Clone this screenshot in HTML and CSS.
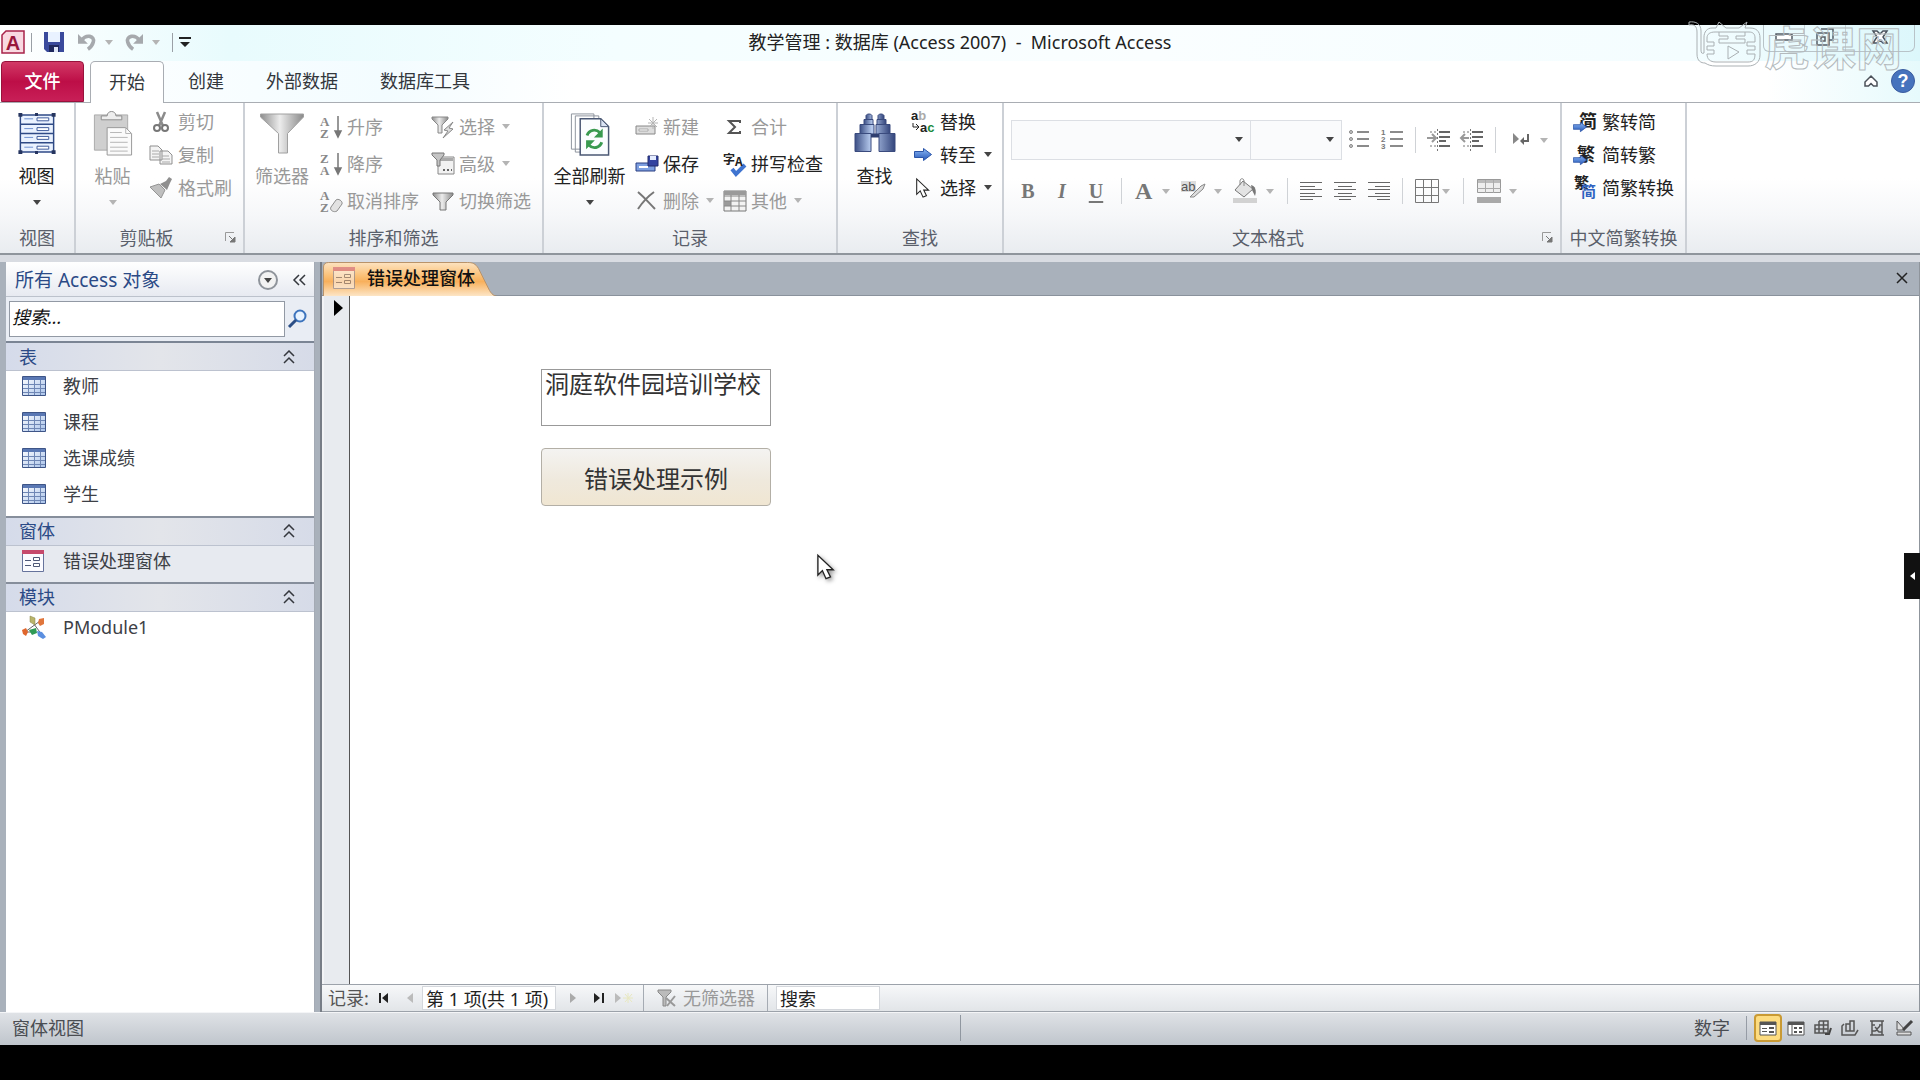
FILE: index.html
```html
<!DOCTYPE html>
<html lang="zh-CN">
<head>
<meta charset="utf-8">
<title>教学管理 : 数据库 (Access 2007) - Microsoft Access</title>
<link rel="stylesheet" href="styles.css">
</head>
<body>
<svg class="defs" aria-hidden="true">
  <defs>
    <linearGradient id="gMetal" x1="0" x2="1"><stop offset="0" stop-color="#8d8d8d"/><stop offset=".45" stop-color="#ececec"/><stop offset="1" stop-color="#8a8a8a"/></linearGradient>
    <linearGradient id="gBlue" x1="0" x2="1"><stop offset="0" stop-color="#3c4f85"/><stop offset=".4" stop-color="#b9cdf0"/><stop offset="1" stop-color="#33457c"/></linearGradient>
    <linearGradient id="gArrow" x1="0" x2="0" y1="0" y2="1"><stop offset="0" stop-color="#8db9f5"/><stop offset="1" stop-color="#2456b8"/></linearGradient>
    <linearGradient id="gCell" x1="0" x2="1" y1="0" y2="1"><stop offset="0" stop-color="#fff"/><stop offset="1" stop-color="#a9c3ea"/></linearGradient>
  </defs>
  <symbol id="table" viewBox="0 0 24 20"><path d="M.5.500h23v19H.5z" fill="url(#gCell)" stroke="#3e5587"/><path d="M1 1h22v3H1z" fill="#5a78b4"/><path d="M1 8.500h22M1 12.500h22M1 16.500h22M6.500 4v15M12.500 4v15M18.500 4v15" stroke="#6f87b5"/></symbol>
  <symbol id="form" viewBox="0 0 22 22"><path d="M.5 1.500h21v20H.5z" fill="#fbfbff" stroke="#66739c"/><path d="M0 0h22v4H0z" fill="#c64a6c"/><path d="M3 10.500h6M3 15.500h6" stroke="#4e5878"/><path d="M11.500 7.500h6v3h-6zM11.500 13.500h6v3h-6z" fill="#fff" stroke="#4e5878"/></symbol>
  <symbol id="funnel" viewBox="0 0 44 40"><path d="M.5.500h43v3L27.500 20v19.500h-9V20L.5 3.500z" fill="url(#gMetal)" stroke="#a0a0a0"/></symbol>
  <symbol id="cursor" viewBox="0 0 20 28"><path d="M1 1v22l5-5 4 9 5-2-4-8h7z" fill="#fff" stroke="#222" stroke-width="1.500"/></symbol>
  <symbol id="bluearrow" viewBox="0 0 18 13"><path d="M.5 3.500h9v-3l8 6-8 6v-3h-9z" fill="url(#gArrow)" stroke="#2a54a8"/></symbol>
  <symbol id="undo" viewBox="0 0 20 20"><path d="M4 8c5-7 15-5 13 2-1 4-3 6-6 8" fill="none" stroke="#a6a9ad" stroke-width="4"/><path d="M0 1v11h11z" fill="#a6a9ad"/></symbol>
  <symbol id="chev" viewBox="0 0 12 14"><path d="M1 6l5-5 5 5M1 13l5-5 5 5" fill="none" stroke="#34373d" stroke-width="1.500"/></symbol>
  <symbol id="launch" viewBox="0 0 11 11"><path d="M.5 9V.500H9" fill="none" stroke="#999"/><path d="M4 4l5 5M10 5v5H5z" fill="#777" stroke="#777"/></symbol>
</svg>

<div class="window">
  <header class="titlebar">
    <div class="quick">
      <svg class="applogo" viewBox="0 0 24 24"><path d="M5 1h18v22H1V5z" fill="#f9d9e1" stroke="#a8234a" stroke-width="1.500"/><text x="12" y="20" text-anchor="middle" class="logo-a">A</text></svg>
      <span class="vbar"></span>
      <button class="qbtn save" aria-label="保存"><svg width="20" height="20" viewBox="0 0 20 20"><path d="M0 0h20v20H3l-3-3z" fill="#3a4a9c"/><path d="M4 0h12v10H4z" fill="#e9f2ff"/><path d="M5 13h10v7H5z" fill="#20295e"/><path d="M10 15h4v5h-4z" fill="#dfe6f7"/></svg></button>
      <button class="qbtn undo" aria-label="撤消"><svg width="18" height="18"><use href="#undo"/></svg><i class="arrow dim"></i></button>
      <button class="qbtn undo" aria-label="恢复"><svg class="flip" width="18" height="18"><use href="#undo"/></svg><i class="arrow dim"></i></button>
      <span class="vbar"></span>
      <button class="qbtn" aria-label="自定义快速访问工具栏"><svg width="12" height="12" viewBox="0 0 12 12"><path d="M0 1h12v2H0zM1 6h10l-5 5z" fill="#222"/></svg></button>
    </div>
    <h1 class="title">教学管理 : 数据库 (Access 2007)&nbsp; -&nbsp; Microsoft Access</h1>
    <div class="winctl">
      <button aria-label="最小化"><svg width="18" height="8" viewBox="0 0 18 8"><path d="M1 1h16v6H1z" fill="#fff" stroke="#555d66" stroke-width="1.500"/></svg></button>
      <button aria-label="还原"><svg width="18" height="18" viewBox="0 0 18 18"><path d="M5 1h12v11h-4M1 5h12v12H1zM5 9h4v4H5z" fill="none" stroke="#555d66" stroke-width="1.500"/></svg></button>
      <button class="wide" aria-label="关闭"><svg width="16" height="14" viewBox="0 0 16 14"><path d="M1 1h4l3 3 3-3h4l-4 6 4 6h-4l-3-3-3 3H1l4-6z" fill="#fff" stroke="#4a525c" stroke-width="1.500"/></svg></button>
    </div>
    <div class="watermark" aria-hidden="true">
      <svg width="72" height="48" viewBox="0 0 72 48"><g fill="none" stroke="#aab0b3"><path d="M1 4c5-1 8 1 8 7v22c0 7 4 9 8 9 3 2 6 3 11 3h32c7 0 12-4 12-11V17c0-7-4-10-10-10h-5l2-6-8 6H38l-7-6-3 6h-4c-5 0-8 4-8 9v16c-2 1-3 0-3-3V10c0-7-5-10-12-9z"/><path d="M27 11h34c4 0 6 2 6 6v4h-8v4h8v4h-8v4h8c0 6-2 8-7 8H28c-6 0-9-3-9-8h7v-4h-7v-4h7v-4h-7v-4c0-4 3-6 8-6zM31 11v4h9v3h-9v4h26v-4h-9v-3h9v-4M40 25l11 6-11 7z"/></g></svg><span>虎课网</span>
    </div>
  </header>

  <nav class="tabs">
    <button class="tab file">文件</button>
    <button class="tab active">开始</button>
    <button class="tab">创建</button>
    <button class="tab">外部数据</button>
    <button class="tab">数据库工具</button>
    <div class="tabs-end">
      <button aria-label="功能区最小化"><svg width="14" height="12" viewBox="0 0 14 12"><path d="M7 1l6 6v4H9.500L7 8.500 4.500 11H1V7z" fill="#fff" stroke="#4c525a" stroke-width="1.500"/></svg></button>
      <button class="help" aria-label="帮助">?</button>
    </div>
  </nav>

  <section class="ribbon">
    <div class="group g-view">
      <div class="body">
        <button class="big"><svg class="ico" width="38" height="46" viewBox="0 0 38 46"><path d="M2 4h34v38H2z" fill="#eaf2ff" stroke="#2f4a86" stroke-width="1.500"/><path d="M2 13.500h34M2 23h34M2 32.500h34" stroke="#2f4a86" stroke-width="1.500"/><path d="M6 8h9M6 18h9M6 27h9M6 37h9" stroke="#6e8fd0"/><path d="M19 7h12v3H19zM19 17h12v3H19zM19 26h12v3H19zM19 36h12v3H19z" fill="#fff" stroke="#3d5a9b"/><path d="M0 2h4v4H0zM34 2h4v4h-4zM0 40h4v4H0zM34 40h4v4h-4zM17 2h3v3h-3zM17 41h3v3h-3z" fill="#26355f"/></svg><span>视图</span><i class="arrow"></i></button>
      </div>
      <div class="foot"><span>视图</span></div>
    </div>

    <div class="group g-clip">
      <div class="body">
        <button class="big off"><svg class="ico" width="40" height="46" viewBox="0 0 40 46"><path d="M1 4h34v36H1z" fill="#cfcfcf" stroke="#ababab"/><path d="M8 9V5h6c0-6 9-6 9 0h6v4z" fill="#eee" stroke="#8d8d8d"/><path d="M14 17h19l6 6v22H14z" fill="#fafafa" stroke="#999"/><path d="M33 17v6h6M17 22h12M17 27h18M17 32h18M17 37h18M17 41h18" fill="none" stroke="#b5b5b5"/></svg><span>粘贴</span><i class="arrow dim"></i></button>
        <div class="col tight">
          <button class="small off"><svg width="24" height="24" viewBox="0 0 24 24"><path d="M8 2l6 14M16 2l-6 14" stroke="#8b8b8b" stroke-width="2.500"/><circle cx="8" cy="18" r="3" fill="#fff" stroke="#777" stroke-width="2"/><circle cx="16" cy="18" r="3" fill="#fff" stroke="#777" stroke-width="2"/></svg>剪切</button>
          <button class="small off"><svg width="24" height="24" viewBox="0 0 24 24"><path d="M1 3h8l4 4v10H1zM11 8h8l4 4v9H11z" fill="#f4f4f4" stroke="#8f8f8f"/><path d="M3 8h7M3 11h7M3 14h7M13 13h7M13 16h8M13 19h8" stroke="#aaa"/></svg>复制</button>
          <button class="small off"><svg width="24" height="24" viewBox="0 0 24 24"><path d="M1 11l9-3 6 6-4 8z" fill="#bfbfbf" stroke="#949494"/><path d="M11 8l6-3 3-4 3 2-2 4-3 7z" fill="#8f8f8f"/></svg>格式刷</button>
        </div>
      </div>
      <div class="foot"><span>剪贴板</span><svg class="launch" width="11" height="11"><use href="#launch"/></svg></div>
    </div>

    <div class="group g-sort">
      <div class="body">
        <button class="big off"><svg class="ico" width="44" height="40"><use href="#funnel"/></svg><span>筛选器</span></button>
        <div class="col loose">
          <button class="small off"><svg width="24" height="24" viewBox="0 0 24 24"><text x="1" y="11" class="az">A</text><text x="1" y="23" class="az">Z</text><path d="M19 1v18M16 16l3 6 3-6z" stroke="#777" stroke-width="1.500" fill="#777"/></svg>升序</button>
          <button class="small off"><svg width="24" height="24" viewBox="0 0 24 24"><text x="1" y="11" class="az">Z</text><text x="1" y="23" class="az">A</text><path d="M19 1v18M16 16l3 6 3-6z" stroke="#777" stroke-width="1.500" fill="#777"/></svg>降序</button>
          <button class="small off"><svg width="24" height="24" viewBox="0 0 24 24"><text x="1" y="11" class="az">A</text><text x="1" y="23" class="az">Z</text><path d="M12 18l5-7c2-2 7 1 6 4l-5 7c-3 2-8-1-6-4z" fill="#e2e2e2" stroke="#8f8f8f"/></svg>取消排序</button>
        </div>
        <div class="col loose">
          <button class="small off"><svg width="24" height="24" viewBox="0 0 24 24"><path d="M1 2h16v2l-6 6v8H7v-8L1 4z" fill="url(#gMetal)" stroke="#888"/><path d="M22 7l-9 8 4 1-5 7 10-9-4-1z" fill="#ddd" stroke="#888"/></svg>选择<i class="arrow dim"></i></button>
          <button class="small off"><svg width="24" height="24" viewBox="0 0 24 24"><path d="M7 5h16v17H7z" fill="#f2f2f2" stroke="#888"/><path d="M9 6h13v3H9z" fill="#aaa"/><path d="M1 1h12v2L9 8v6H6V8L1 3z" fill="#c4c4c4" stroke="#777"/><path d="M12 18h2M16 18h2M20 18h1" stroke="#666" stroke-width="2"/></svg>高级<i class="arrow dim"></i></button>
          <button class="small off"><svg width="24" height="24" viewBox="0 0 24 24"><path d="M2 4h20v2l-7 7v8H9v-8L2 6z" fill="url(#gMetal)" stroke="#777"/></svg>切换筛选</button>
        </div>
      </div>
      <div class="foot"><span>排序和筛选</span></div>
    </div>

    <div class="group g-rec">
      <div class="body">
        <button class="big"><svg class="ico" width="40" height="46" viewBox="0 0 40 46"><path d="M1 3h23v36H1zM5 5h24v37H5z" fill="#fff" stroke="#8d939d"/><path d="M10 8h21l8 8v29H10z" fill="#fbfdff" stroke="#4b5874" stroke-width="1.500"/><path d="M31 8v8h8z" fill="#dbe4f4" stroke="#4b5874"/><path d="M17 25c2-6 9-7 13-3M32 32c-2 6-9 7-13 3" fill="none" stroke="#3a9a50" stroke-width="3"/><path d="M33 18v9h-9zM16 39v-9h9z" fill="#3a9a50"/></svg><span>全部刷新</span><i class="arrow"></i></button>
        <div class="col loose">
          <button class="small off"><svg width="24" height="24" viewBox="0 0 24 24"><path d="M1 11h19v8H1z" fill="#ddd" stroke="#888"/><path d="M4 14h9v2H4z" fill="#fff" stroke="#aaa"/><path d="M18 2v12M13 8h10M14 4l8 8M22 4l-8 8" stroke="#b5b5b5"/></svg>新建</button>
          <button class="small"><svg width="24" height="24" viewBox="0 0 24 24"><path d="M1 11h19v8H1z" fill="#7d9fe0" stroke="#2b3f82"/><path d="M4 14h9v2H4z" fill="#fff"/><path d="M13 4h10v10H13z" fill="#3343a0" stroke="#222c6c"/><path d="M15 4h6v4h-6z" fill="#e4ecff"/></svg>保存</button>
          <button class="small off"><svg width="24" height="24" viewBox="0 0 24 24"><path d="M3 3c6 5 11 11 17 17M19 3C12 8 7 14 3 20" fill="none" stroke="#777" stroke-width="2"/></svg>删除<i class="arrow dim"></i></button>
        </div>
        <div class="col loose">
          <button class="small off"><svg width="24" height="24" viewBox="0 0 24 24"><path d="M17 8V6H6l6 6-6 6h11v-2" fill="none" stroke="#555" stroke-width="2"/></svg>合计</button>
          <button class="small"><svg width="24" height="24" viewBox="0 0 24 24"><path d="M9 17l4 5 9-9" fill="none" stroke="#3f74d0" stroke-width="4"/><text x="0" y="12" class="tiny">字</text><text x="12" y="14" class="tiny">A</text></svg>拼写检查</button>
          <button class="small off"><svg width="24" height="24" viewBox="0 0 24 24"><path d="M1 2h22v20H1z" fill="#f3f3f3" stroke="#777"/><path d="M1 2h22v4H1zM1 12h7v5H1z" fill="#9a9a9a"/><path d="M1 7h22M1 12h22M1 17h22M8 6v16M16 6v16" stroke="#888"/></svg>其他<i class="arrow dim"></i></button>
        </div>
      </div>
      <div class="foot"><span>记录</span></div>
    </div>

    <div class="group g-find">
      <div class="body">
        <button class="big"><svg class="ico" width="42" height="40" viewBox="0 0 42 40"><g fill="url(#gBlue)" stroke="#3a4b7e"><path d="M12 2c1-2 5-2 6 0v4h-6zM24 2c1-2 5-2 6 0v4h-6z"/><path d="M10 6h9v6h-9zM23 6h9v6h-9z"/><path d="M6 11h14v11H6zM22 11h14v11H22z"/><path d="M1 20h16v18H1zM25 20h16v18H25z"/></g><path d="M17 20h8v4h-8z" fill="#2f3f70"/></svg><span>查找</span></button>
        <div class="col tight">
          <button class="small"><svg width="24" height="24" viewBox="0 0 24 24"><text x="0" y="10" class="ab">a<tspan fill="#aaa">b</tspan></text><text x="9" y="22" class="ab">a<tspan fill="#178a3c">c</tspan></text><path d="M2 13v4h5M5 14l3 3-3 3" fill="none" stroke="#222"/></svg>替换</button>
          <button class="small"><svg width="24" height="24" viewBox="-3 -5 24 24"><use href="#bluearrow" width="18" height="13"/></svg>转至<i class="arrow"></i></button>
          <button class="small"><svg width="24" height="24" viewBox="-5 -1 24 24"><use href="#cursor" width="14" height="22"/></svg>选择<i class="arrow"></i></button>
        </div>
      </div>
      <div class="foot"><span>查找</span></div>
    </div>

    <div class="group g-text">
      <div class="body fmt">
        <div class="fmtrow">
          <span class="combo font"><select aria-label="字体" disabled><option></option></select><i class="arrow"></i></span>
          <span class="combo size"><select aria-label="字号" disabled><option></option></select><i class="arrow"></i></span>
          <button class="tool" aria-label="项目符号"><svg width="24" height="24" viewBox="0 0 24 24"><path d="M10 4h12M10 11h12M10 18h12" stroke="#666" stroke-width="1.500"/><g fill="#ccc" stroke="#888"><circle cx="4" cy="4" r="1.500"/><circle cx="4" cy="11" r="1.500"/><circle cx="4" cy="18" r="1.500"/></g></svg></button>
          <button class="tool num" aria-label="编号"><svg width="24" height="24" viewBox="0 0 24 24"><path d="M10 4h13M10 11h13M10 18h13" stroke="#666" stroke-width="1.500"/><text x="1" y="7" class="nums">1</text><text x="1" y="14" class="nums">2</text><text x="1" y="21" class="nums">3</text></svg></button>
          <span class="sep"></span>
          <button class="tool ind" aria-label="增加缩进量"><svg width="24" height="24" viewBox="0 0 24 24"><path d="M12 4h11M12 9h11M12 13h7M12 18h11" stroke="#666" stroke-width="2"/><path d="M0 10h8M5 6l4 4-4 4" fill="none" stroke="#999" stroke-width="2"/><path d="M3 4h6M3 18h6M10.500 1v22" stroke="#777" stroke-dasharray="2 2"/></svg></button>
          <button class="tool ind" aria-label="减少缩进量"><svg width="24" height="24" viewBox="0 0 24 24"><path d="M12 4h11M12 9h11M12 13h7M12 18h11" stroke="#666" stroke-width="2"/><path d="M9 10H1M5 6l-4 4 4 4" fill="none" stroke="#999" stroke-width="2"/><path d="M3 4h6M3 18h6M10.500 1v22" stroke="#777" stroke-dasharray="2 2"/></svg></button>
          <span class="sep near"></span>
          <button class="tool par" aria-label="文字方向"><svg width="18" height="14" viewBox="0 0 18 14"><path d="M1 0v11l6-5z" fill="#888"/><path d="M16 1v7h-6" fill="none" stroke="#666" stroke-width="2"/><path d="M12 4v8L8 8z" fill="#666"/></svg><i class="arrow dim"></i></button>
        </div>
        <div class="fmtrow two">
          <button class="tool biu"><b>B</b></button>
          <button class="tool biu"><b class="it">I</b></button>
          <button class="tool biu"><b class="un">U</b></button>
          <span class="sep"></span>
          <button class="tool drop fc"><b>A</b><i class="arrow dim"></i></button>
          <button class="tool drop" aria-label="突出显示"><svg width="26" height="24" viewBox="0 0 26 24"><path d="M1 2h15v11H1z" fill="#ddd"/><text x="1" y="12" class="abh">ab</text><path d="M10 18l11-11 4-2-2 5-9 8z" fill="#ddd" stroke="#888"/></svg><i class="arrow dim"></i></button>
          <button class="tool drop" aria-label="填充颜色"><svg width="26" height="26" viewBox="0 0 26 26"><path d="M11 3l10 8-9 8-9-7z" fill="#e3e3e3" stroke="#777"/><path d="M8 7V3c0-3 4-3 4 0v5" fill="none" stroke="#888"/><path d="M19 7c4 1 6 5 4 11l-3-6z" fill="#777"/><path d="M1 20h24v5H1z" fill="#d2d2d2"/></svg><i class="arrow dim"></i></button>
          <span class="sep"></span>
          <button class="tool al" aria-label="左对齐"><svg width="22" height="20" viewBox="0 0 22 20"><path d="M0 1.500h22M0 5.500h15M0 8.500h22M0 12.500h15M0 15.500h22M0 18.500h13" stroke="#666"/></svg></button>
          <button class="tool al" aria-label="居中"><svg width="22" height="20" viewBox="0 0 22 20"><path d="M0 1.500h22M4 5.500h14M0 8.500h22M4 12.500h14M0 15.500h22M5 18.500h12" stroke="#666"/></svg></button>
          <button class="tool al" aria-label="右对齐"><svg width="22" height="20" viewBox="0 0 22 20"><path d="M0 1.500h22M7 5.500h15M0 8.500h22M7 12.500h15M0 15.500h22M9 18.500h13" stroke="#666"/></svg></button>
          <span class="sep"></span>
          <button class="tool grid" aria-label="网格线"><svg width="24" height="24" viewBox="0 0 24 24"><path d="M.5.500h23v23H.5zM8.500 0v24M16.500 0v24M0 8.500h24M0 16.500h24" fill="none" stroke="#777"/></svg><i class="arrow dim"></i></button>
          <span class="sep"></span>
          <button class="tool drop alt" aria-label="可选行颜色"><svg width="24" height="24" viewBox="0 0 24 24"><path d="M.5.500h23v13H.5z" fill="#eee" stroke="#999"/><path d="M1 1h22v3H1z" fill="#bbb"/><path d="M8.500 1v13M16.500 1v13M0 9.500h24" stroke="#aaa"/><path d="M0 18h24v6H0z" fill="#a9a9a9"/></svg><i class="arrow dim"></i></button>
        </div>
      </div>
      <div class="foot"><span>文本格式</span><svg class="launch" width="11" height="11"><use href="#launch"/></svg></div>
    </div>

    <div class="group g-cn">
      <div class="body">
        <div class="col tight">
          <button class="small"><svg width="26" height="24" viewBox="0 0 26 24"><text x="6" y="18" class="cn">简</text><use href="#bluearrow" y="11" width="14" height="12"/></svg>繁转简</button>
          <button class="small"><svg width="26" height="24" viewBox="0 0 26 24"><text x="4" y="18" class="cn">繁</text><use href="#bluearrow" y="11" width="14" height="12"/></svg>简转繁</button>
          <button class="small"><svg width="26" height="24" viewBox="0 0 26 24"><text x="1" y="12" class="cn sm">繁</text><text x="8" y="21" class="cn sm blue">简</text></svg>简繁转换</button>
        </div>
      </div>
      <div class="foot"><span>中文简繁转换</span></div>
    </div>
  </section>

  <main class="work">
    <aside class="pane">
      <div class="pane-head"><h2>所有 Access 对象</h2>
        <button class="round" aria-label="选择类别"><i class="arrow"></i></button>
        <button class="fold" aria-label="折叠"><svg width="14" height="12" viewBox="0 0 14 12"><path d="M6 1L1 6l5 5M12 1L7 6l5 5" fill="none" stroke="#34373d" stroke-width="1.500"/></svg></button></div>
      <div class="pane-search"><input type="text" aria-label="搜索对象" placeholder="搜索..."><button aria-label="搜索"><svg width="20" height="20" viewBox="0 0 20 20"><circle cx="12" cy="7" r="5.500" fill="#e8f3ff" stroke="#3d74bd" stroke-width="2"/><path d="M8 11l-7 7" stroke="#2b4e86" stroke-width="3"/></svg></button></div>
      <button class="cat"><span>表</span><svg width="12" height="14"><use href="#chev"/></svg></button>
      <ul class="items">
        <li><a href="#"><svg width="24" height="20"><use href="#table"/></svg>教师</a></li>
        <li><a href="#"><svg width="24" height="20"><use href="#table"/></svg>课程</a></li>
        <li><a href="#"><svg width="24" height="20"><use href="#table"/></svg>选课成绩</a></li>
        <li><a href="#"><svg width="24" height="20"><use href="#table"/></svg>学生</a></li>
      </ul>
      <button class="cat"><span>窗体</span><svg width="12" height="14"><use href="#chev"/></svg></button>
      <ul class="items sel">
        <li><a href="#"><svg width="24" height="22"><use href="#form" width="22"/></svg>错误处理窗体</a></li>
      </ul>
      <button class="cat"><span>模块</span><svg width="12" height="14"><use href="#chev"/></svg></button>
      <ul class="items">
        <li><a href="#"><svg class="mod" width="24" height="24" viewBox="0 0 24 24"><path d="M3 17L18 6M9 5l11 15M3 17h9" stroke="#666" fill="none"/><path d="M8 1l5 2v7l-5-3z" fill="#b9b46a" stroke="#8a8748" stroke-width=".5"/><path d="M17 4l5-1v6l-4 2-2-3z" fill="#e0763c"/><path d="M0 15l4-2 2 4-2 4-3-2z" fill="#e0662c"/><path d="M7 15l7-2 1 5-5 2z" fill="#2f9a55"/><path d="M15 16l5 1 4 5-3 2-5-3z" fill="#5b8fe0"/></svg>PModule1</a></li>
      </ul>
    </aside>

    <section class="doc">
      <div class="doc-tabs">
        <button class="doc-tab"><svg class="shape" width="180" height="35" viewBox="0 0 180 35" aria-hidden="true"><defs><linearGradient id="gTab" x1="0" x2="0" y1="0" y2="1"><stop offset="0" stop-color="#fde3c0"/><stop offset=".4" stop-color="#fbbf74"/><stop offset=".55" stop-color="#f8b05c"/><stop offset="1" stop-color="#fde9cd"/></linearGradient></defs><path d="M.5 35V5c0-3 2-4.500 5-4.500h139c5 0 8 1 11 6l11 22c3 5 6 6.500 13 6.500z" fill="url(#gTab)" stroke="#b9936a"/></svg><svg class="ficon" width="22" height="22"><use href="#form"/></svg><span>错误处理窗体</span></button>
        <button class="doc-close" aria-label="关闭"><svg width="12" height="12" viewBox="0 0 12 12"><path d="M1 1l10 10M11 1L1 11" stroke="#222" stroke-width="1.500"/></svg></button>
      </div>
      <div class="canvas">
        <div class="selector"><svg width="9" height="16" viewBox="0 0 9 16"><path d="M0 0l9 8-9 8z"/></svg></div>
        <form class="form">
          <input class="field" type="text" aria-label="名称" value="洞庭软件园培训学校">
          <button class="cmd" type="button">错误处理示例</button>
          <svg class="mouse" width="18" height="28"><use href="#cursor"/></svg>
        </form>
        <button class="drawer" aria-label="展开"><svg width="5" height="8" viewBox="0 0 5 8"><path d="M5 0v8L0 4z" fill="#fff"/></svg></button>
      </div>
      <div class="recbar">
        <label for="rec">记录:</label>
        <button aria-label="第一条"><svg width="10" height="12" viewBox="0 0 10 12"><path d="M0 1h2v10H0zM9 1v10L3 6z" fill="#222"/></svg></button>
        <button aria-label="上一条"><svg width="6" height="12" viewBox="0 0 6 12"><path d="M6 1v10L0 6z" fill="#bbb"/></svg></button>
        <input id="rec" type="text" value="第 1 项(共 1 项)">
        <button aria-label="下一条"><svg width="6" height="12" viewBox="0 0 6 12"><path d="M0 1v10l6-5z" fill="#aaa"/></svg></button>
        <button class="last" aria-label="最后一条"><svg width="10" height="12" viewBox="0 0 10 12"><path d="M8 1h2v10H8zM0 1v10l6-5z" fill="#222"/></svg></button>
        <button class="newrec" aria-label="新记录"><svg width="18" height="12" viewBox="0 0 18 12"><path d="M0 1v10l6-5z" fill="#bbb"/><path d="M13 1v10M8 6h10M10 2l7 8M17 2l-7 8" stroke="#e8e8c0"/></svg></button>
        <button class="nofilter"><svg width="20" height="18" viewBox="0 0 20 18"><path d="M1 1h13v2L9 8v9H6V8L1 3z" fill="#bbb" stroke="#888"/><path d="M9 9l9 8M18 7l-8 10" stroke="#999" stroke-width="2"/></svg>无筛选器</button>
        <input class="recsearch" type="text" aria-label="搜索" value="搜索">
      </div>
    </section>
  </main>

  <footer class="status">
    <span class="mode">窗体视图</span>
    <span class="numlock">数字</span>
    <div class="views">
      <button class="on" aria-label="窗体视图"><svg width="18" height="15" viewBox="0 0 18 15"><path d="M1 1h16v13H1z" fill="#fff" stroke="#555"/><path d="M1 1h16v3H1zM3 7h5v1H3zM3 10h5v1H3zM10 6h5v2h-5zM10 10h5v2h-5z" fill="#555"/></svg></button>
      <button aria-label="数据表视图"><svg width="18" height="15" viewBox="0 0 18 15"><path d="M1 1h16v13H1zM5 4v10" fill="#fff" stroke="#555"/><path d="M1 1h16v3H1zM7 6h3v2H7zM12 6h3v2h-3zM7 10h3v2H7zM12 10h3v2h-3z" fill="#555"/></svg></button>
      <button aria-label="数据透视表视图"><svg width="18" height="16" viewBox="0 0 18 16"><path d="M5 1h9v12H1V5h13M5 1v12M9.500 1v12M1 9h13" fill="none" stroke="#555" stroke-width="1.500"/><path d="M11 14h4l2-6" fill="none" stroke="#444" stroke-width="2"/></svg></button>
      <button aria-label="数据透视图视图"><svg width="18" height="16" viewBox="0 0 18 16"><path d="M5 11V4h4V1h4v10zM9 4v7M3 4L1 6v9h13l3-5" fill="none" stroke="#555" stroke-width="1.500"/></svg></button>
      <button aria-label="布局视图"><svg width="18" height="16" viewBox="0 0 18 16"><path d="M2 1h14M2 15h14M4 1v14M14 1v14M4 5h3M11 5h3M7 7l2 2 3-3M4 11h3l2-1 2 2h3" fill="none" stroke="#555" stroke-width="1.500"/></svg></button>
      <button aria-label="设计视图"><svg width="18" height="16" viewBox="0 0 18 16"><path d="M2 1v9h8zM2 12h14v3H2z" fill="#ddd" stroke="#555"/><path d="M17 1l-9 9" stroke="#444" stroke-width="3"/></svg></button>
    </div>
  </footer>
</div>
</body>
</html>
```
FILE: styles.css
```css
* { box-sizing: border-box; }
body {
  margin: 0;
  min-height: 100vh;
  padding: 25px 0 35px;
  display: flex;
  flex-direction: column;
  background: #000;
  color: #222;
  font: 18px/26px "Noto Sans", "Noto Sans CJK SC", sans-serif;
}
button, input, select { font: inherit; color: inherit; margin: 0; padding: 0; border: 0; background: none; border-radius: 0; }
h1, h2, ul { margin: 0; padding: 0; font: inherit; list-style: none; }
a { color: inherit; text-decoration: none; }
svg { display: block; flex: none; overflow: visible; }
.defs { position: absolute; width: 0; height: 0; overflow: hidden; }
.window { flex: 1; display: flex; flex-direction: column; background: #fff; min-width: 0; }

.arrow { display: inline-block; flex: none; width: 0; height: 0; border: 4px solid transparent; border-top: 5px solid #444; border-bottom: 0; }
.arrow.dim { border-top-color: #b4b4b4; }

/* title bar */
.titlebar {
  position: relative;
  display: grid;
  grid-template-columns: 1fr auto 1fr;
  height: 36px;
  background: linear-gradient(90deg, #fff, #e8fbfd 12%, #f4feff 32%, #fafeff 60%, #f4fdff 88%, #dcf7fb);
}
.quick { display: flex; align-items: center; padding: 0 0 2px 1px; }
.applogo { width: 24px; height: 24px; }
.logo-a { font: bold 20px "Liberation Sans", sans-serif; fill: #98173c; }
.vbar { width: 1px; height: 19px; background: #9aa0a6; margin: 0 6px; }
.save { margin: 0 14px 0 6px; }
.qbtn { display: flex; align-items: center; }
.undo { gap: 9px; width: 47px; }
.undo + .vbar { margin-left: 0; }
.flip { transform: scaleX(-1); }
.title { align-self: center; white-space: pre; line-height: 34px; padding-bottom: 2px; }
.winctl { justify-self: end; display: flex; height: 27px; margin-right: 5px; border: 1px solid #b8c3c8; border-top: 0; border-radius: 0 0 6px 6px; }
.winctl button { width: 41px; display: flex; align-items: center; justify-content: center; padding-bottom: 2px; border-right: 1px solid #c5d0d4; }
.winctl button.wide { width: 68px; border: 0; }
.watermark { position: absolute; right: 18px; top: -4px; display: flex; align-items: center; gap: 4px; height: 48px; pointer-events: none; }
.watermark span { font: bold 46px/48px "Noto Sans CJK SC", sans-serif; color: transparent; -webkit-text-stroke: 1px #b4babd; }

/* ribbon tabs */
.tabs { display: flex; height: 41px; padding-left: 1px; background: linear-gradient(90deg, #fff, #f3fcff 20%, #fff 30%, #fff 92%, #e6fafc); }
.tab { padding: 0 21px 2px; color: #33373c; }
.tab.file { width: 83px; padding: 0 0 2px; color: #fff; font-weight: 500; border: 1px solid #98123c; border-radius: 4px 4px 0 0; background: linear-gradient(#d23a66, #bd0e47 50%, #c81f57); }
.tab.active { position: relative; margin: 0 3px -1px 6px; padding: 0 18px 2px; border: 1px solid #a9adb3; border-bottom: 0; border-radius: 5px 5px 0 0; background: #fff; }
.tabs-end { margin-left: auto; display: flex; align-items: center; gap: 13px; padding: 0 5px 2px; }
.help { width: 24px; height: 24px; border-radius: 50%; background: #4673bd; border: 1px solid #3a5c9f; color: #fff; font: bold 18px/20px "Liberation Sans", sans-serif; }

/* ribbon */
.ribbon { display: flex; height: 153px; border-top: 1px solid #a9adb3; border-bottom: 2px solid #8f959c; background: linear-gradient(#fff 50%, #f6f7f9 75%, #e9ecf0); }
.group { display: flex; flex-direction: column; border-right: 2px solid #ccd0d6; white-space: nowrap; }
.body { flex: 1; display: flex; }
.foot { position: relative; text-align: center; line-height: 26px; padding-bottom: 2px; color: #5a5f6b; }
.launch { position: absolute; right: 7px; top: 7px; }
.g-view { width: 76px; }
.g-clip { width: 169px; }
.g-sort { width: 299px; }
.g-rec { width: 294px; }
.g-find { width: 166px; }
.g-text { width: 558px; }
.g-cn { width: 125px; }
.g-clip .foot { padding-right: 26px; }
.g-text .foot { padding-right: 28px; }
.big { display: flex; flex-direction: column; align-items: center; align-self: flex-start; padding-top: 8px; }
.big .ico { height: 46px; margin-bottom: 6px; padding-bottom: 1px; }
.big .arrow { margin-top: 11px; }
.big span { line-height: 26px; }
.g-view .big { width: 73px; }
.g-clip .big { width: 73px; }
.g-sort .big { width: 74px; }
.g-rec .big { width: 91px; }
.g-find .big { width: 73px; }
.off { color: #999; }
.col { display: flex; flex-direction: column; }
.tight { padding-top: 2px; }
.loose { padding-top: 5px; }
.small { display: flex; align-items: center; gap: 4px; height: 37px; }
.tight .small { height: 33px; gap: 5px; }
.small .arrow { margin-left: 3px; }
.g-sort .col + .col { margin-left: 12px; }
.g-rec .col + .col { margin-left: 9px; }
.g-cn .col { padding-left: 11px; }
.g-cn .tight .small { gap: 3px; }
.az { font: bold 13px "Liberation Serif", serif; fill: #888; }
.tiny { font: bold 12px "Noto Sans CJK SC", sans-serif; fill: #222; }
.ab { font: bold 13px "Liberation Sans", sans-serif; fill: #222; }
.abh { font: 13px "Liberation Sans", sans-serif; fill: #555; }
.nums { font: bold 8px "Liberation Sans", sans-serif; fill: #777; }
.cn { font: bold 18px "Noto Sans CJK SC", sans-serif; fill: #222; }
.cn.sm { font-size: 15px; }
.cn.blue { fill: #2f62c0; }

/* text format group */
.fmt { flex-direction: column; padding: 17px 0 0 7px; }
.fmtrow { display: flex; align-items: center; height: 40px; }
.fmtrow.two { height: 36px; margin-top: 13px; padding-left: 5px; }
.combo { position: relative; height: 40px; border: 1px solid #dcdfe4; background: #fafbfc; }
.combo select { width: 100%; height: 100%; appearance: none; opacity: 1; }
.combo .arrow { position: absolute; right: 7px; top: 16px; }
.combo.font { width: 240px; }
.combo.size { width: 91px; border-left: 0; margin-right: 5px; }
.tool { display: flex; align-items: center; justify-content: center; color: #777; }
.tool.num { margin-left: 9px; }
.tool.ind { margin-right: 9px; }
.tool.par { gap: 10px; margin-left: 16px; }
.sep { width: 1px; height: 26px; background: #cfd2d6; margin: 0 11px; }
.sep.near { margin: 0 0 0 2px; }
.biu { width: 24px; margin-right: 10px; font: 20px/24px "Liberation Serif", serif; }
.it { font-style: italic; }
.un { text-decoration: underline; text-underline-offset: 3px; }
.two .sep { margin: 0 13px 0 3px; }
.drop { gap: 8px; margin-right: 10px; }
.fc { gap: 10px; font: 24px/26px "Liberation Serif", serif; }
.al { margin-right: 12px; }
.two .drop + .sep { margin-right: 12px; }
.two .al + .sep { margin: 0 12px 0 0; }
.grid { gap: 3px; margin-right: 10px; }

/* work area */
.work { flex: 1; display: flex; border-top: 7px solid #d9dce2; background: #a9b1bb; padding-left: 6px; min-height: 0; }
.pane { width: 309px; background: #fff; border-right: 1px solid #a4aab4; display: flex; flex-direction: column; }
.pane-head { display: flex; align-items: center; height: 35px; padding: 2px 7px 0 9px; background: linear-gradient(#fff, #e7eaf1); border-bottom: 1px solid #bcc2cc; }
.pane-head h2 { flex: 1; font-size: 19px; color: #2b4a86; }
.round { width: 20px; height: 20px; border: 2px solid #8f949b; border-radius: 50%; background: #f2f2f2; display: flex; align-items: center; justify-content: center; margin-right: 15px; }
.pane-search { display: flex; align-items: center; gap: 3px; height: 46px; padding: 0 6px 0 3px; background: #e9edf4; border-bottom: 2px solid #7b8594; }
.pane-search input { flex: 1; min-width: 0; height: 36px; border: 1px solid #9299a4; background: #fff; padding: 0 3px 4px 2px; font-style: italic; }
.pane-search input::placeholder { color: #111; opacity: 1; }
.pane-search button { width: 20px; }
.cat { display: flex; align-items: center; justify-content: space-between; height: 28px; padding: 0 19px 0 13px; color: #2b4a86; background: linear-gradient(90deg, #d5dbea, #e3e5ea 50%, #d6dbe8); border-bottom: 1px solid #bcc2cf; }
.items + .cat { height: 30px; border-top: 2px solid #868e9b; padding-bottom: 1px; }
.items { padding: 0 16px; }
.items li { height: 36px; }
.items:nth-of-type(1) { padding-bottom: 1px; }
.items a { display: flex; align-items: center; gap: 17px; height: 30px; color: #3d4046; }
.items.sel { background: #e7eaf0; }

.doc { flex: 1; min-width: 0; display: flex; flex-direction: column; margin-left: 5px; border-left: 2px solid #777d86; border-right: 1px solid #8f959c; background: #a9b1bb; }
.doc-tabs { display: flex; justify-content: space-between; height: 34px; border-bottom: 1px solid #8a929c; }
.doc-tab { position: relative; display: flex; align-items: center; gap: 12px; width: 180px; height: 34px; padding: 0 0 3px 11px; color: #111; font-weight: 500; white-space: nowrap; }
.doc-tab .shape { position: absolute; left: 1px; top: 0; }
.doc-tab .ficon, .doc-tab span { position: relative; }
.doc-tab .ficon { opacity: .5; }
.doc-close { padding: 0 11px 2px; }
.canvas { flex: 1; position: relative; display: flex; background: #fff; }
.selector { width: 28px; border-left: 2px solid #f3f4f6; border-right: 1px solid #555; background: #e8ebef; padding: 4px 0 0 10px; }
.form { position: relative; padding: 73px 0 0 191px; display: flex; flex-direction: column; gap: 22px; }
.field { width: 230px; height: 57px; border: 1px solid #999; padding: 0 3px 30px; font-size: 24px; line-height: 26px; color: #333; }
.cmd { width: 230px; height: 58px; border: 1px solid #b3afa6; border-radius: 4px; background: linear-gradient(#f4f3f1, #efe9dd 55%, #f0e6d2); font-size: 24px; padding-top: 3px; color: #333; }
.mouse { position: absolute; left: 467px; top: 257px; filter: drop-shadow(2px 2px 2px #999); }
.drawer { position: absolute; right: -1px; top: 257px; width: 16px; height: 46px; background: #111; display: flex; align-items: center; justify-content: center; }

.recbar { display: flex; align-items: center; height: 28px; border: solid #9ca2aa; border-width: 1px 0; background: linear-gradient(#f7f8f9, #eceef1 50%, #e2e5e8); padding-left: 6px; white-space: nowrap; }
.recbar label { width: 51px; color: #555; }
.recbar button { display: flex; align-items: center; margin-right: 18px; }
.recbar input { height: 24px; line-height: 22px; background: #fff; border: 1px solid #d4d7dc; padding: 0 3px; }
#rec { width: 134px; margin: 0 14px 0 -9px; }
.recbar .last { margin-right: 11px; }
.recbar .newrec { margin-right: 10px; }
.recbar .nofilter { height: 26px; gap: 6px; padding: 0 12px 0 13px; margin-right: 8px; border: solid #a5abb3; border-width: 0 1px; color: #999; }
.recsearch { width: 104px; }

.status { position: relative; display: flex; align-items: center; height: 33px; border-top: 1px solid #f4f5f7; background: linear-gradient(#dfe2e6, #bfc5cc); padding: 0 3px 2px 12px; color: #4a4d52; }
.status::after { content: ""; position: absolute; left: 50%; top: 2px; width: 1px; height: 26px; background: #9097a0; }
.mode { flex: 1; }
.numlock { padding-right: 16px; line-height: 24px; border-right: 1px solid #969ca5; margin-right: 7px; }
.views { display: flex; }
.views button { width: 27px; height: 28px; display: flex; align-items: center; justify-content: center; border-radius: 4px; }
.views .on { width: 28px; border: 2px solid #c99a34; background: #fddc80; }
```
